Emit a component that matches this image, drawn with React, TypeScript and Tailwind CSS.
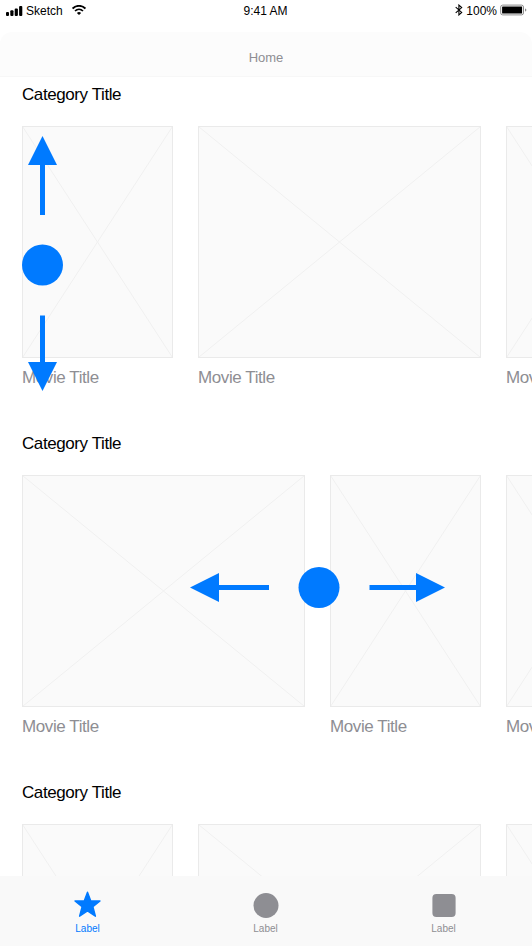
import React from "react";

type Size = "narrow" | "wide";

function Poster({ size }: { size: Size }) {
  const width = size === "narrow" ? 151 : 283;
  return (
    <div className="shrink-0">
      <svg width={width} height={232} className="block" fill="none">
        <rect x="0.5" y="0.5" width={width - 1} height="231" fill="#fafafa" />
        <path d={`M0.5 0.5L${width - 0.5} 231.5M${width - 0.5} 0.5L0.5 231.5`} stroke="#f0f0f0" />
        <rect x="0.5" y="0.5" width={width - 1} height="231" stroke="#eaeaea" />
      </svg>
      <div className="mt-[9px] text-[17px] leading-[22px] tracking-[-0.41px] whitespace-nowrap text-[#8e8e93]">
        Movie Title
      </div>
    </div>
  );
}

function Category({ sizes }: { sizes: Size[] }) {
  return (
    <section className="mb-11 pl-[22px]">
      <h2 className="text-[17px] leading-[22px] tracking-[-0.41px] text-black">Category Title</h2>
      <div className="mt-5 flex gap-[25px] overflow-hidden">
        {sizes.map((size, i) => (
          <Poster key={i} size={size} />
        ))}
      </div>
    </section>
  );
}

function StatusBar() {
  return (
    <div className="grid h-8 grid-cols-3 px-[5px] text-xs text-black">
      <div className="flex h-[22px] items-center">
        <svg width="18" height="12" className="mr-[3px] mb-px block" fill="#000">
          <rect x="1" y="7" width="3" height="4" rx="1" />
          <rect x="5.3" y="5.2" width="3.2" height="5.8" rx="1" />
          <rect x="9.7" y="3.5" width="3.2" height="7.5" rx="1" />
          <rect x="14.1" y="1" width="3.2" height="10" rx="1" />
        </svg>
        Sketch
        <svg width="14" height="10" viewBox="0 0 14 10" className="mb-[2px] ml-[9px] block" fill="none" stroke="#000">
          <path d="M0.6 3.5C4.2 -0.1 9.8 -0.1 13.4 3.5" strokeWidth="1.8" />
          <path d="M3 6C5.3 3.8 8.7 3.8 11 6" strokeWidth="1.7" />
          <path d="M4.9 7.9Q7 6.2 9.1 7.9L7 10Z" fill="#000" stroke="none" />
        </svg>
      </div>
      <div className="flex h-[22px] items-center justify-center pr-px">9:41 AM</div>
      <div className="flex h-[22px] items-center justify-end">
        <svg width="8" height="12" viewBox="0 0 8 12" className="mr-[3px] mb-[2px] block" fill="none" stroke="#000" strokeWidth="1.1">
          <path d="M0.7 3.2L6.7 8.4L3.9 10.9V1.1L6.7 3.6L0.7 8.8" />
        </svg>
        100%
        <svg width="27" height="12" viewBox="0 0 27 12" className="mb-[2px] ml-[3px] block">
          <rect x="0.7" y="1.1" width="22.8" height="9.8" rx="2" fill="none" stroke="#8c8c8c" />
          <rect x="2.1" y="2.5" width="20" height="7" rx="0.5" fill="#000" />
          <path d="M25 4.4Q26.4 4.8 26.4 6Q26.4 7.2 25 7.6Z" fill="#8c8c8c" />
        </svg>
      </div>
    </div>
  );
}

function VerticalGesture() {
  return (
    <svg width="42" height="255" className="absolute top-[136px] left-[22px]" fill="#007aff">
      <path d="M20.5 0L35 29H23V79H18V29H6Z" />
      <circle cx="20.5" cy="129" r="20.5" />
      <path d="M18 179.5H23V226H35L20.5 255L6 226H18Z" />
    </svg>
  );
}

function HorizontalGesture() {
  return (
    <svg width="255" height="42" className="absolute top-[567px] left-[190px]" fill="#007aff">
      <path d="M0 20.5L29 6V18H79V23H29V35Z" />
      <circle cx="129" cy="20.5" r="20.5" />
      <path d="M179.5 18H226V6L255 20.5L226 35V23H179.5Z" />
    </svg>
  );
}

function TabBar() {
  return (
    <nav className="absolute inset-x-0 bottom-0 flex h-[70px] justify-between bg-[#f9f9f9] px-[74px] pt-[15px] text-[10px] leading-3 text-[#8e8e93]">
      <div className="flex w-7 flex-col items-center text-[#007aff]">
        <svg width="28" height="28" viewBox="0 0 28 28" className="block" fill="currentColor" stroke="currentColor" strokeWidth="1.4" strokeLinejoin="round">
          <path d="M13.5 1.2L16.8 10H26L18.9 15.8L21.4 25.2L13.5 20L5.6 25.2L8.1 15.8L1 10H10.2Z" />
        </svg>
        <span className="mt-1 pr-px">Label</span>
      </div>
      <div className="flex w-7 flex-col items-center">
        <svg width="28" height="28" className="block" fill="currentColor">
          <circle cx="14" cy="14.5" r="12.5" />
        </svg>
        <span className="mt-1 pr-px">Label</span>
      </div>
      <div className="flex w-7 flex-col items-center">
        <svg width="28" height="28" className="block" fill="currentColor">
          <rect x="2.4" y="3" width="23.2" height="23" rx="4" />
        </svg>
        <span className="mt-1 pr-px">Label</span>
      </div>
    </nav>
  );
}

export default function App() {
  return (
    <div className="relative h-[946px] w-[532px] overflow-hidden bg-white font-['Liberation_Sans',Arial,sans-serif]">
      <StatusBar />
      <header className="flex h-[45px] justify-center rounded-t-[12px] border-b border-[#f7f7f7] bg-[#fcfcfc] pt-[17px] text-[13px] leading-[18px] text-[#8e8e93]">
        Home
      </header>
      <main className="pt-[7px]">
        <Category sizes={["narrow", "wide", "narrow"]} />
        <Category sizes={["wide", "narrow", "narrow"]} />
        <Category sizes={["narrow", "wide", "narrow"]} />
      </main>
      <VerticalGesture />
      <HorizontalGesture />
      <TabBar />
    </div>
  );
}
